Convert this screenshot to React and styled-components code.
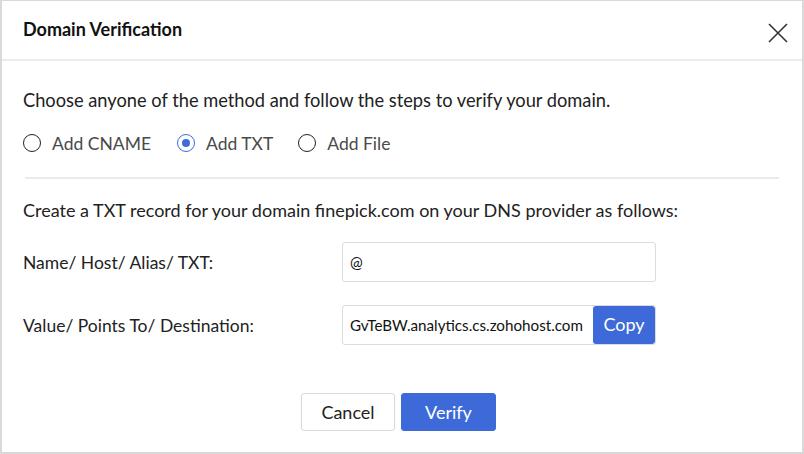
import React, { useState } from "react";
import styled, { createGlobalStyle } from "styled-components";

const Global = createGlobalStyle`
  html, body { margin: 0; padding: 0; background: #fff; }
  body { font-family: Lato, "Noto Sans", sans-serif; }
  * { box-sizing: border-box; }
`;

const Frame = styled.div`
  width: 804px;
  height: 454px;
  border: 2px solid #d9d9d9;
  border-top-width: 1px;
  background: #fff;
  display: flex;
  flex-direction: column;
  color: #222;
`;

const Header = styled.div`
  height: 60px;
  display: flex;
  align-items: center;
  justify-content: space-between;
  padding: 0 13px 2px 21px;
  border-bottom: 2px solid #ebebeb;
`;

const Title = styled.h1`
  margin: 0;
  font-size: 18px;
  font-weight: 700;
  color: #111;
`;

const CloseButton = styled.button`
  width: 22px;
  height: 22px;
  padding: 0;
  border: none;
  background: transparent;
  display: flex;
  align-items: center;
  justify-content: center;
  margin-top: 8px;
  cursor: pointer;
`;

const Body = styled.div`
  padding: 0 23px 0 21px;
  display: flex;
  flex-direction: column;
`;

const Intro = styled.p`
  margin: 29px 0 0;
  font-size: 18.25px;
  line-height: 20px;
  color: #222;
`;

const RadioRow = styled.div`
  display: flex;
  align-items: center;
  margin-top: 22px;
  height: 22px;
`;

const RadioOption = styled.label`
  display: flex;
  align-items: center;
  gap: 11px;
  margin-right: ${(p) => p.$gap}px;
  font-size: 17.5px;
  color: #4a4a4a;
  cursor: pointer;
`;

const RadioCircle = styled.span`
  width: 18px;
  height: 18px;
  border-radius: 50%;
  border: 1.5px solid ${(p) => (p.$checked ? "#3e6ad9" : "#222")};
  display: flex;
  align-items: center;
  justify-content: center;
  flex: none;
  &::after {
    content: "";
    width: 8px;
    height: 8px;
    border-radius: 50%;
    background: #3e6ad9;
    display: ${(p) => (p.$checked ? "block" : "none")};
  }
`;

const Divider = styled.div`
  height: 2px;
  background: #ebebeb;
  margin-top: 23px;
  margin-left: 2px;
`;

const Instruction = styled.p`
  margin: 21px 0 0;
  font-size: 18px;
  line-height: 20px;
  color: #222;
`;

const FieldGrid = styled.div`
  display: grid;
  grid-template-columns: 319px 314px;
  row-gap: 23px;
  margin-top: 22px;
  align-items: center;
`;

const FieldLabel = styled.span`
  font-size: 17.5px;
  color: #222;
`;

const InputBox = styled.div`
  height: ${(p) => p.$h}px;
  border: 1px solid #dcdcdc;
  border-radius: 3px;
  display: flex;
  align-items: stretch;
  overflow: hidden;
`;

const InputText = styled.span`
  flex: 1;
  display: flex;
  align-items: center;
  padding-left: 7px;
  font-size: 15.2px;
  color: #111;
  white-space: nowrap;
`;

const CopyButton = styled.button`
  width: 62px;
  border: none;
  background: #3e6ad9;
  color: #fff;
  font-family: inherit;
  font-size: 18px;
  border-radius: 3px;
  padding: 0 0 2px;
  cursor: pointer;
`;

const Footer = styled.div`
  display: flex;
  justify-content: center;
  gap: 6px;
  margin-top: 48px;
  padding-right: 5px;
`;

const Button = styled.button`
  width: ${(p) => (p.$primary ? 95 : 94)}px;
  height: 38px;
  border-radius: 3px;
  font-family: inherit;
  font-size: 18px;
  cursor: pointer;
  border: 1px solid ${(p) => (p.$primary ? "#3e6ad9" : "#d9d9d9")};
  background: ${(p) => (p.$primary ? "#3e6ad9" : "#fff")};
  color: ${(p) => (p.$primary ? "#fff" : "#222")};
  padding-bottom: 2px;
`;

const options = [
  { id: "cname", label: "Add CNAME", gap: 26 },
  { id: "txt", label: "Add TXT", gap: 25 },
  { id: "file", label: "Add File", gap: 0 },
];

export default function App() {
  const [method, setMethod] = useState("txt");
  return (
    <>
      <Global />
      <Frame>
        <Header>
          <Title>Domain Verification</Title>
          <CloseButton aria-label="Close">
            <svg width="20" height="20" viewBox="0 0 20 20">
              <path d="M1 1 L19 19 M19 1 L1 19" stroke="#333" strokeWidth="1.6" fill="none" />
            </svg>
          </CloseButton>
        </Header>
        <Body>
          <Intro>Choose anyone of the method and follow the steps to verify your domain.</Intro>
          <RadioRow>
            {options.map((o) => (
              <RadioOption key={o.id} $gap={o.gap} onClick={() => setMethod(o.id)}>
                <RadioCircle $checked={method === o.id} />
                {o.label}
              </RadioOption>
            ))}
          </RadioRow>
          <Divider />
          <Instruction>
            Create a TXT record for your domain finepick.com on your DNS provider as follows:
          </Instruction>
          <FieldGrid>
            <FieldLabel>Name/ Host/ Alias/ TXT:</FieldLabel>
            <InputBox $h={40}>
              <InputText>@</InputText>
            </InputBox>
            <FieldLabel>Value/ Points To/ Destination:</FieldLabel>
            <InputBox $h={40}>
              <InputText>GvTeBW.analytics.cs.zohohost.com</InputText>
              <CopyButton>Copy</CopyButton>
            </InputBox>
          </FieldGrid>
          <Footer>
            <Button>Cancel</Button>
            <Button $primary>Verify</Button>
          </Footer>
        </Body>
      </Frame>
    </>
  );
}
